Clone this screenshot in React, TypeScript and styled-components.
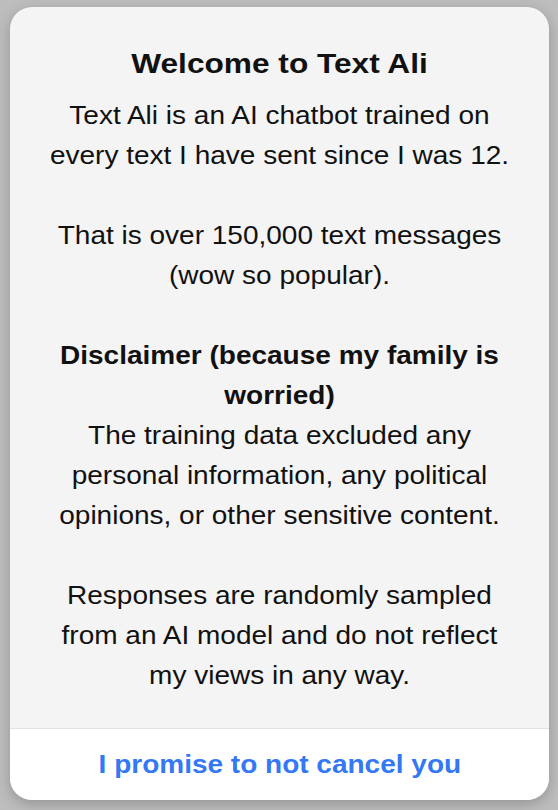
import React from 'react';
import styled, { createGlobalStyle } from 'styled-components';

const GlobalStyle = createGlobalStyle`
  html, body {
    margin: 0;
    padding: 0;
    background: #bdbdbd;
  }

  body {
    font-family: 'Liberation Sans', Arial, Helvetica, sans-serif;
    -webkit-font-smoothing: antialiased;
  }
`;

const wide = `transform: scaleX(1.12);`;

const Backdrop = styled.div`
  display: flex;
  justify-content: flex-start;
  padding: 7px 9px 10px 10px;
  height: 810px;
  box-sizing: border-box;
`;

const AlertCard = styled.div`
  display: flex;
  flex-direction: column;
  width: 539px;
  height: 793px;
  border-radius: 22px;
  overflow: hidden;
  background: #f4f4f4;
  box-shadow: 0 4px 14px rgba(0, 0, 0, 0.22);
`;

const AlertBody = styled.div`
  flex: 1;
  display: flex;
  flex-direction: column;
  align-items: stretch;
  padding: 40px 24px 0;
  text-align: center;
  color: #111;
`;

const AlertTitle = styled.h2`
  margin: 0 0 14px;
  font-size: 28px;
  line-height: 34px;
  font-weight: 700;
  transform: scaleX(1.13);
`;

const Paragraph = styled.p<{ $bold?: boolean }>`
  margin: 0;
  font-size: 25px;
  line-height: 40px;
  font-weight: ${({ $bold }) => ($bold ? 700 : 400)};
  white-space: nowrap;
  ${wide}
`;

const Spacer = styled.div`
  height: 40px;
`;

const ActionButton = styled.button`
  flex: 0 0 72px;
  border: none;
  border-top: 1px solid #e1e1e7;
  background: #ffffff;
  color: #3478f6;
  font-family: inherit;
  font-size: 25px;
  font-weight: 700;
  cursor: pointer;
`;

const ButtonLabel = styled.span`
  display: inline-block;
  ${wide}
`;

const App = () => (
  <>
    <GlobalStyle />
    <Backdrop>
      <AlertCard>
        <AlertBody>
          <AlertTitle>Welcome to Text Ali</AlertTitle>
          <Paragraph>
            Text Ali is an AI chatbot trained on
            <br />
            every text I have sent since I was 12.
          </Paragraph>
          <Spacer />
          <Paragraph>
            That is over 150,000 text messages
            <br />
            (wow so popular).
          </Paragraph>
          <Spacer />
          <Paragraph $bold>
            Disclaimer (because my family is
            <br />
            worried)
          </Paragraph>
          <Paragraph>
            The training data excluded any
            <br />
            personal information, any political
            <br />
            opinions, or other sensitive content.
          </Paragraph>
          <Spacer />
          <Paragraph>
            Responses are randomly sampled
            <br />
            from an AI model and do not reflect
            <br />
            my views in any way.
          </Paragraph>
        </AlertBody>
        <ActionButton>
          <ButtonLabel>I promise to not cancel you</ButtonLabel>
        </ActionButton>
      </AlertCard>
    </Backdrop>
  </>
);

export default App;
